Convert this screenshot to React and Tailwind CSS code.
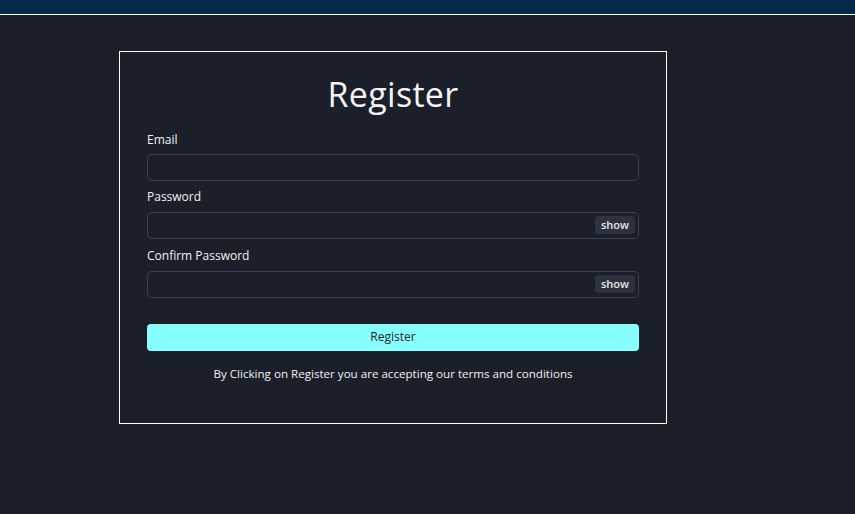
import React, { useState } from 'react';

const PasswordField = ({ label }) => {
  const [visible, setVisible] = useState(false);
  return (
    <div className="flex flex-col">
      <label className="text-[12px] leading-[16px] text-[#f1f1f1]">{label}</label>
      <div className="relative mt-[7px]">
        <input
          type={visible ? 'text' : 'password'}
          className="w-full h-[27px] rounded-[5px] border border-[#3b404b] bg-transparent px-2 text-[12px] text-white outline-none"
        />
        <button
          type="button"
          onClick={() => setVisible((v) => !v)}
          className="absolute right-[4px] top-[4px] w-[40px] h-[18px] rounded-[4px] bg-[#2d3140] text-[11px] font-semibold leading-[18px] text-[#e8e8e8]"
        >
          {visible ? 'hide' : 'show'}
        </button>
      </div>
    </div>
  );
};

const App = () => {
  return (
    <div className="min-h-[514px] bg-[#1b1f2a] font-['Open_Sans',sans-serif]">
      {/* top bar */}
      <div className="h-[14px] bg-[#012a47] border-b border-white box-content" />

      <div className="ml-[119px] mt-[36px] w-[548px] h-[373px] border border-white px-[27px] pt-[22px]">
        <h1 className="text-center text-[34px] leading-[40px] font-medium tracking-[0.3px] text-[#f3f3f3]">Register</h1>

        <div className="mt-[17px] flex flex-col gap-[8.5px]">
          <div className="flex flex-col">
            <label className="text-[12px] leading-[16px] pt-[1px] text-[#f1f1f1]">Email</label>
            <input
              type="email"
              className="mt-[6px] w-full h-[26.5px] rounded-[5px] border border-[#3b404b] bg-transparent px-2 text-[12px] text-white outline-none"
            />
          </div>
          <PasswordField label="Password" />
          <PasswordField label="Confirm Password" />
        </div>

        <button
          type="button"
          className="mt-[26px] w-full h-[27px] rounded-[4px] bg-[#88ffff] text-[12px] text-[#1b1f2a]"
        >
          Register
        </button>

        <p className="mt-[15px] text-center text-[11.6px] leading-[16px] text-[#f1f1f1]">
          By Clicking on Register you are accepting our terms and conditions
        </p>
      </div>
    </div>
  );
};

export default App;
